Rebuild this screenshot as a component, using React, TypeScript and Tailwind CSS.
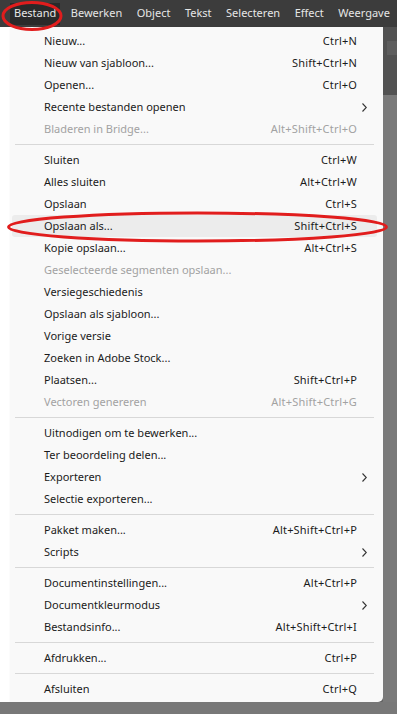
import React from "react";

type Item =
  | { sep: true }
  | { label: string; sc?: string; sub?: boolean; dis?: boolean; hl?: boolean; sep?: false };

const items: Item[] = [
  { label: "Nieuw...", sc: "Ctrl+N" },
  { label: "Nieuw van sjabloon...", sc: "Shift+Ctrl+N" },
  { label: "Openen...", sc: "Ctrl+O" },
  { label: "Recente bestanden openen", sub: true },
  { label: "Bladeren in Bridge...", sc: "Alt+Shift+Ctrl+O", dis: true },
  { sep: true },
  { label: "Sluiten", sc: "Ctrl+W" },
  { label: "Alles sluiten", sc: "Alt+Ctrl+W" },
  { label: "Opslaan", sc: "Ctrl+S" },
  { label: "Opslaan als...", sc: "Shift+Ctrl+S", hl: true },
  { label: "Kopie opslaan...", sc: "Alt+Ctrl+S" },
  { label: "Geselecteerde segmenten opslaan...", dis: true },
  { label: "Versiegeschiedenis" },
  { label: "Opslaan als sjabloon..." },
  { label: "Vorige versie" },
  { label: "Zoeken in Adobe Stock..." },
  { label: "Plaatsen...", sc: "Shift+Ctrl+P" },
  { label: "Vectoren genereren", sc: "Alt+Shift+Ctrl+G", dis: true },
  { sep: true },
  { label: "Uitnodigen om te bewerken..." },
  { label: "Ter beoordeling delen..." },
  { label: "Exporteren", sub: true },
  { label: "Selectie exporteren..." },
  { sep: true },
  { label: "Pakket maken...", sc: "Alt+Shift+Ctrl+P" },
  { label: "Scripts", sub: true },
  { sep: true },
  { label: "Documentinstellingen...", sc: "Alt+Ctrl+P" },
  { label: "Documentkleurmodus", sub: true },
  { label: "Bestandsinfo...", sc: "Alt+Shift+Ctrl+I" },
  { sep: true },
  { label: "Afdrukken...", sc: "Ctrl+P" },
  { sep: true },
  { label: "Afsluiten", sc: "Ctrl+Q" },
];

const top = ["Bestand", "Bewerken", "Object", "Tekst", "Selecteren", "Effect", "Weergave"];

export default function App() {
  return (
    <div
      className="relative w-[397px] h-[714px] overflow-hidden flex flex-col bg-[#787878]"
      style={{ fontFamily: '"Segoe UI", "Noto Sans", "Liberation Sans", sans-serif' }}
    >
      <div className="h-[27px] bg-[#3c3c3c] flex items-center pl-[10px] text-[11px] text-[#e6e6e6] shrink-0 whitespace-nowrap">
        {top.map((t, i) => (
          <div
            key={t}
            className={
              "h-[22px] flex items-center px-[4px] mr-[6.5px] " + (i === 0 ? "bg-[#2a2a2a]" : "")
            }
          >
            {t}
          </div>
        ))}
      </div>
      <div className="flex">
        <div className="w-[10px] bg-white" />
        <div className="w-[373px] bg-[#f9f9f9] rounded-br-[5px] pt-[3px] pb-[2px] text-[11px] text-[#1b1b1b] shadow-[1px_1px_2px_rgba(0,0,0,0.25)]">
          {items.map((it, i) =>
            it.sep ? (
              <div key={i} className="h-[9px] flex items-center pl-[5px] pr-[9px]">
                <div className="h-px w-full bg-[#d8d8d8]" />
              </div>
            ) : (
              <div
                key={i}
                className={
                  "h-[22px] flex items-center ml-[2px] mr-[6px] pl-[32px] pr-[20px] rounded-[3px] relative " +
                  (it.hl ? "bg-[#ececec] " : "") +
                  (it.dis ? "text-[#a2a2a2]" : "")
                }
              >
                <span className="flex-1">{it.label}</span>
                {it.sc && <span className="tracking-[0.2px]">{it.sc}</span>}
                {it.sub && (
                  <svg
                    className="absolute right-[10px] top-[7px]"
                    width="5"
                    height="9"
                    viewBox="0 0 5 9"
                  >
                    <path d="M0.5 0.5 L4.3 4.5 L0.5 8.5" fill="none" stroke="#333" strokeWidth="1.1" />
                  </svg>
                )}
              </div>
            )
          )}
        </div>
        <div className="flex-1 flex flex-col">
          <div className="h-[68px] bg-[#525252] relative">
            <div className="absolute left-[4px] top-[14px] w-[10px] h-[14px] bg-[#5e5e5e]" />
          </div>
          <div className="flex-1 bg-[#7a7a7a]" />
        </div>
      </div>
      <div className="flex-1 bg-[#787878]" />
      <svg className="absolute left-0 top-0 pointer-events-none" width="397" height="714">
        <ellipse cx="32" cy="16" rx="29" ry="13.5" fill="none" stroke="#e11d1d" strokeWidth="3" />
        <ellipse cx="197.5" cy="227" rx="189" ry="14" fill="none" stroke="#e11d1d" strokeWidth="3" />
      </svg>
    </div>
  );
}
